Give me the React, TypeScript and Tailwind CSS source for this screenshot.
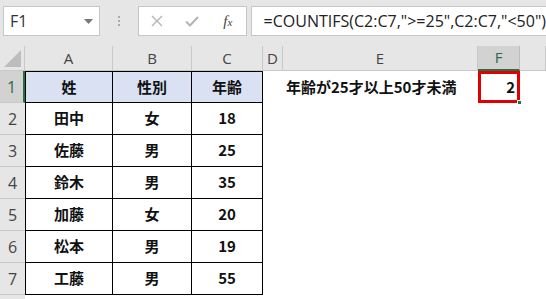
import React from "react";

const cols = ["A", "B", "C", "D", "E", "F", ""];

const rows = [
  ["姓", "性別", "年齢"],
  ["田中", "女", "18"],
  ["佐藤", "男", "25"],
  ["鈴木", "男", "35"],
  ["加藤", "女", "20"],
  ["松本", "男", "19"],
  ["工藤", "男", "55"],
];

const jp = { fontFamily: '"Noto Sans CJK JP", "Noto Sans", sans-serif' };
const ui = { fontFamily: '"Open Sans", "Noto Sans", sans-serif' };

function FormulaBar() {
  return (
    <div className="flex h-[46px] items-start gap-1 bg-[#e6e6e6] pt-[6px] pl-[3px]" style={ui}>
      {/* Name box */}
      <div className="flex h-[30px] w-[100px] items-center justify-between border border-[#c6c6c6] bg-white pl-[6px] pr-[6px]">
        <span className="text-[16px] text-[#333]">F1</span>
        <svg width="9" height="5" viewBox="0 0 9 5">
          <path d="M0 0h9L4.5 5z" fill="#777" />
        </svg>
      </div>
      <div className="flex h-[30px] w-[30px] flex-col items-center justify-center gap-[2px]">
        <span className="h-[2px] w-[2px] bg-[#aaa]" />
        <span className="h-[2px] w-[2px] bg-[#aaa]" />
        <span className="h-[2px] w-[2px] bg-[#aaa]" />
      </div>
      {/* Cancel / enter / fx */}
      <div className="flex h-[30px] w-[109px] items-center border border-[#c6c6c6] bg-white">
        <div className="flex w-[36px] justify-center pl-[2px]">
          <svg width="12" height="12" viewBox="0 0 12 12">
            <path d="M1 1l10 10M11 1L1 11" stroke="#b4b4b4" strokeWidth="1.4" />
          </svg>
        </div>
        <div className="flex w-[36px] justify-center">
          <svg width="14" height="11" viewBox="0 0 14 11">
            <path d="M1 5.5l4 4L13 1" stroke="#b4b4b4" strokeWidth="2" fill="none" />
          </svg>
        </div>
        <div className="flex w-[36px] justify-center">
          <span className="text-[15px] italic text-[#444]" style={{ fontFamily: '"Liberation Serif", serif' }}>
            f<span className="text-[11px]">x</span>
          </span>
        </div>
      </div>
      {/* Formula input */}
      <div className="flex h-[30px] flex-1 items-center border border-r-0 border-[#c6c6c6] bg-white pl-[12px]">
        <span className="whitespace-nowrap text-[16px] text-[#222]">=COUNTIFS(C2:C7,"&gt;=25",C2:C7,"&lt;50")</span>
      </div>
    </div>
  );
}

function Sheet() {
  return (
    <div className="grid grid-cols-[25px_88px_79px_71px_20px_195px_42px_1fr] grid-rows-[25px_32px_32px_32px_32px_32px_32px_32px_32px] bg-white">
      {/* corner */}
      <div className="relative border-r border-b border-[#c8c8c8] bg-[#e6e6e6]">
        <svg className="absolute right-[3px] bottom-[3px]" width="17" height="17" viewBox="0 0 17 17">
          <path d="M17 0v17H0z" fill="#bdbdbd" />
        </svg>
      </div>
      {cols.map((c, k) => (
        <div
          key={k}
          className={
            c === "F"
              ? "flex items-center justify-center border-r border-b-2 border-[#bdbdbd] border-b-[#217346] bg-[#d2d2d2] text-[15px] text-[#2b6b45]"
              : "flex items-center justify-center border-r border-b border-[#c8c8c8] bg-[#e6e6e6] text-[15px] text-[#444]"
          }
          style={ui}
        >
          {c}
        </div>
      ))}

      {rows.map((r, i) => (
        <React.Fragment key={i}>
          <div
            className={
              i === 0
                ? "flex items-center justify-center border-r-2 border-b border-[#c8c8c8] border-r-[#217346] bg-[#d2d2d2] text-[16px] text-[#2b6b45]"
                : "flex items-center justify-center border-b border-[#c8c8c8] bg-[#e6e6e6] text-[16px] text-[#444]"
            }
            style={ui}
          >
            {i + 1}
          </div>
          {r.map((v, j) => (
            <div
              key={j}
              className={
                (i === 0 ? "border-t bg-[#d9e1f2] " : "") +
                (j === 0 ? "border-l " : "") +
                "flex items-center justify-center border-r border-b border-black text-[15px] font-bold text-[#111]"
              }
              style={jp}
            >
              {v}
            </div>
          ))}
          <div />
          <div className="flex items-center pl-[3px] text-[15px] font-bold text-[#111]" style={jp}>
            {i === 0 ? "年齢が25才以上50才未満" : ""}
          </div>
          {i === 0 ? (
            <div className="relative flex items-center justify-end border-[3px] border-[#e00000] pr-[2px] text-[15px] font-bold text-[#111]" style={jp}>
              2
              <span className="absolute right-[-5px] bottom-[-5px] h-[5px] w-[5px] border border-white bg-[#217346]" />
            </div>
          ) : (
            <div />
          )}
          <div />
        </React.Fragment>
      ))}

      <div className="flex items-start justify-center bg-[#e6e6e6] pt-[6px] text-[16px] text-[#444]" style={ui}>
        8
      </div>
    </div>
  );
}

export default function App() {
  return (
    <div className="h-[299px] w-[546px] overflow-hidden bg-white">
      <FormulaBar />
      <Sheet />
    </div>
  );
}
